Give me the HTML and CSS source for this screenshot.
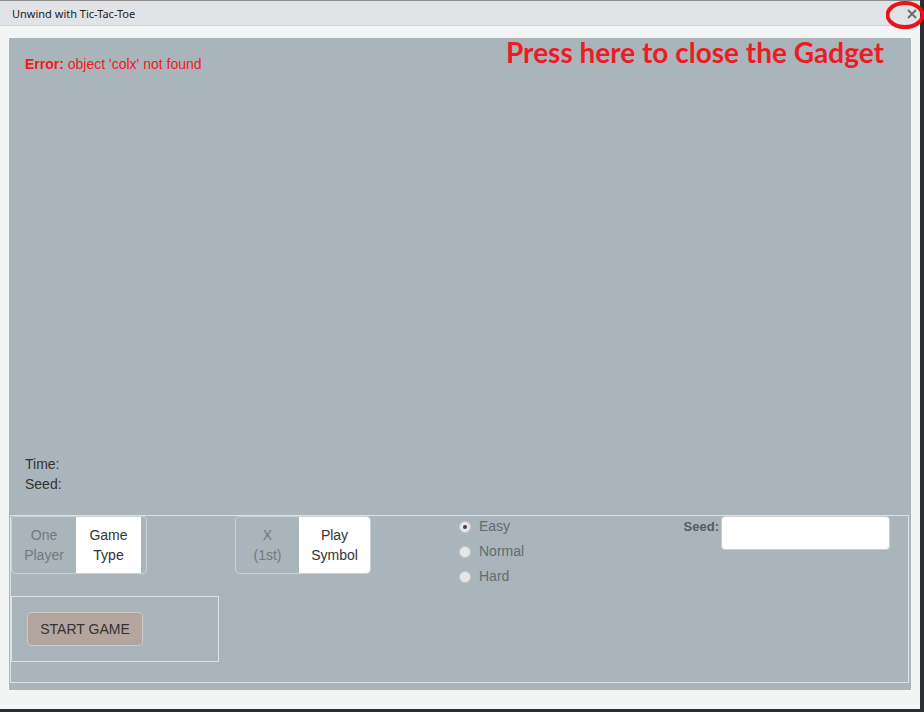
FILE: index.html
```html
<!DOCTYPE html>
<html>
<head>
<meta charset="utf-8">
<link rel="stylesheet" href="styles.css">
</head>
<body>
<div class="window">
  <div class="titlebar">
    <span class="title">Unwind with Tic-Tac-Toe</span>
    <svg class="close" width="10" height="10" viewBox="0 0 10 10"><path d="M1 1 L9 9 M9 1 L1 9" stroke="#6a6a6a" stroke-width="1.8" fill="none"/></svg>
  </div>
  <div class="content">
    <div class="panel">
      <div class="error"><b>Error:</b> object 'colx' not found</div>
      <div class="spacer"></div>
      <div class="stats">
        <div>Time:</div>
        <div>Seed:</div>
      </div>
      <div class="controls">
        <div class="col-left">
          <div class="btn-group g1">
            <div class="cell off">One<br>Player</div>
            <div class="cell on">Game<br>Type</div>
          </div>
          <div class="start-box">
            <button class="start">START GAME</button>
          </div>
        </div>
        <div class="btn-group g2">
          <div class="cell off">X<br>(1st)</div>
          <div class="cell on">Play<br>Symbol</div>
        </div>
        <div class="radios">
          <label class="radio"><span class="dot checked"></span>Easy</label>
          <label class="radio"><span class="dot"></span>Normal</label>
          <label class="radio"><span class="dot"></span>Hard</label>
        </div>
        <div class="seed">
          <span class="seed-label">Seed:</span>
          <span class="seed-input"></span>
        </div>
      </div>
    </div>
  </div>
</div>
<div class="note">Press here to close the Gadget</div>
<svg class="ring" width="40" height="30" viewBox="0 0 40 30"><ellipse cx="19" cy="14" rx="17.5" ry="12" fill="none" stroke="#e8141c" stroke-width="4"/></svg>
</body>
</html>
```
FILE: styles.css
```css
html, body {
  margin: 0;
  padding: 0;
}
body {
  background: #2b2d30;
  width: 924px;
  height: 712px;
  overflow: hidden;
  position: relative;
  font-family: "Liberation Sans", Arial, sans-serif;
}
.window {
  width: 920px;
  height: 709px;
  background: #f3f4f4;
  border-top: 1px solid #8c8c8c;
  box-sizing: border-box;
  display: flex;
  flex-direction: column;
}
.titlebar {
  height: 25px;
  background: #e1e3e6;
  border-bottom: 1px solid #d2d4d8;
  box-sizing: border-box;
  display: flex;
  align-items: center;
  justify-content: space-between;
  padding: 0 3px 0 12px;
}
.title {
  font-family: "Noto Sans", "Open Sans", sans-serif;
  font-size: 11px;
  color: #222;
}
.close {
  display: block;
  margin-top: 2px;
}
.content {
  padding: 12px 0 0 9px;
}
.panel {
  width: 902px;
  height: 652px;
  background: #a9b5ba;
  display: flex;
  flex-direction: column;
  box-sizing: border-box;
  padding: 16px 2px 7px 1px;
}
.error {
  color: #f21a1a;
  font-size: 14px;
  line-height: 20px;
  padding-left: 15px;
}
.spacer {
  flex: 1;
}
.stats {
  color: #333;
  font-size: 14px;
  line-height: 20px;
  padding-left: 15px;
  margin-bottom: 21px;
}
.controls {
  height: 168px;
  box-sizing: border-box;
  border: 1px solid #dde2e4;
  display: flex;
  align-items: flex-start;
  font-size: 14px;
}
.col-left {
  width: 208px;
  display: flex;
  flex-direction: column;
}
.btn-group {
  height: 58px;
  box-sizing: border-box;
  border: 1px solid #c9d1d4;
  border-radius: 4px;
  display: flex;
  line-height: 20px;
}
.g1 {
  width: 136px;
  padding-right: 5px;
}
.g2 {
  width: 136px;
  margin-left: 16px;
}
.cell {
  display: flex;
  align-items: center;
  justify-content: center;
  text-align: center;
}
.off {
  color: #727a7e;
}
.on {
  background: #fff;
  color: #333;
}
.g1 .off { width: 64px; }
.g1 .on { width: 65px; }
.g2 .off { width: 63px; }
.g2 .on { width: 71px; border-radius: 0 4px 4px 0; }
.start-box {
  margin-top: 22px;
  height: 66px;
  box-sizing: border-box;
  border: 1px solid #dde2e4;
  padding: 15px;
}
.start {
  width: 116px;
  height: 34px;
  background: #b4a59e;
  border: 1px solid #ccc;
  border-radius: 4px;
  font-family: "Liberation Sans", Arial, sans-serif;
  font-size: 14px;
  color: #333;
  padding: 0;
}
.radios {
  margin-left: 88px;
  display: flex;
  flex-direction: column;
  color: #646c70;
  line-height: 25px;
  margin-top: -2px;
}
.radio {
  display: flex;
  align-items: center;
}
.dot {
  width: 12px;
  height: 12px;
  border-radius: 50%;
  background: #e6e6e6;
  border: 1px solid #c8c8c8;
  box-sizing: border-box;
  margin-right: 8px;
  position: relative;
}
.dot.checked::after {
  content: "";
  position: absolute;
  left: 3px;
  top: 3px;
  width: 4px;
  height: 4px;
  border-radius: 50%;
  background: #444;
}
.seed {
  margin-left: auto;
  margin-right: 18px;
  display: flex;
  align-items: flex-start;
}
.seed-label {
  font-weight: bold;
  font-size: 13px;
  color: #555c60;
  margin-top: 3px;
  margin-right: 2px;
}
.seed-input {
  width: 169px;
  height: 34px;
  background: #fff;
  border: 1px solid #ccc;
  border-radius: 4px;
  box-sizing: border-box;
}
.note {
  position: absolute;
  left: 506px;
  top: 35px;
  font-family: Lato, sans-serif;
  font-weight: bold;
  font-size: 28px;
  line-height: 34px;
  color: #ed1c24;
  white-space: nowrap;
}
.ring {
  position: absolute;
  left: 886px;
  top: 1px;
}
```
